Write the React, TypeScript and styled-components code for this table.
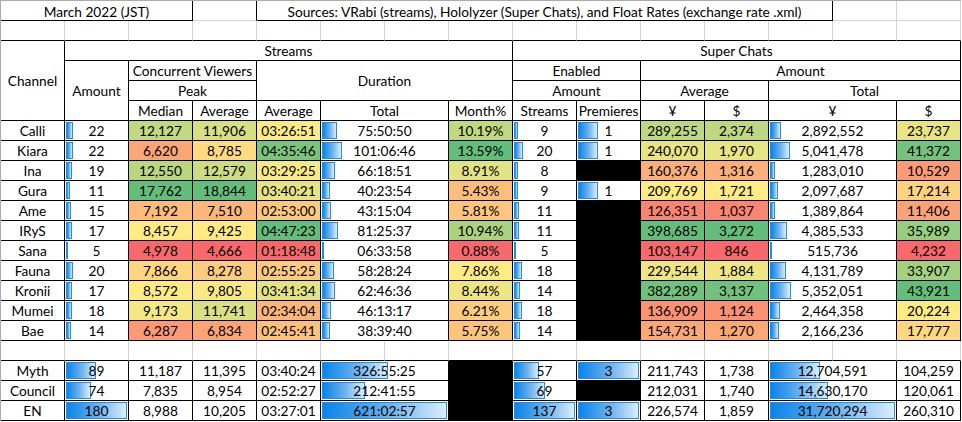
import React from 'react';
import styled, { createGlobalStyle } from 'styled-components';

const GlobalStyle = createGlobalStyle`
  html, body {
    margin: 0;
    padding: 0;
    background: #ffffff;
  }
  body {
    font-family: Lato, "Liberation Sans", sans-serif;
    font-size: 13.7px;
    color: #000000;
  }
`;

const INK = '#000000';
const GRID = '#d4d4d4';

const RED = [248, 105, 107];
const YELLOW = [255, 235, 132];
const GREEN = [99, 190, 123];

type Member = {
  name: string;
  amount: number;
  median: number;
  average: number;
  durAvg: string;
  durTotal: string;
  month: number | null;
  streams: number;
  premieres: number | null;
  yenAvg: number;
  usdAvg: number;
  yenTotal: number;
  usdTotal: number;
};

const members: Member[] = [
  { name: 'Calli', amount: 22, median: 12127, average: 11906, durAvg: '03:26:51', durTotal: '75:50:50', month: 10.19, streams: 9, premieres: 1, yenAvg: 289255, usdAvg: 2374, yenTotal: 2892552, usdTotal: 23737 },
  { name: 'Kiara', amount: 22, median: 6620, average: 8785, durAvg: '04:35:46', durTotal: '101:06:46', month: 13.59, streams: 20, premieres: 1, yenAvg: 240070, usdAvg: 1970, yenTotal: 5041478, usdTotal: 41372 },
  { name: 'Ina', amount: 19, median: 12550, average: 12579, durAvg: '03:29:25', durTotal: '66:18:51', month: 8.91, streams: 8, premieres: null, yenAvg: 160376, usdAvg: 1316, yenTotal: 1283010, usdTotal: 10529 },
  { name: 'Gura', amount: 11, median: 17762, average: 18844, durAvg: '03:40:21', durTotal: '40:23:54', month: 5.43, streams: 9, premieres: 1, yenAvg: 209769, usdAvg: 1721, yenTotal: 2097687, usdTotal: 17214 },
  { name: 'Ame', amount: 15, median: 7192, average: 7510, durAvg: '02:53:00', durTotal: '43:15:04', month: 5.81, streams: 11, premieres: null, yenAvg: 126351, usdAvg: 1037, yenTotal: 1389864, usdTotal: 11406 },
  { name: 'IRyS', amount: 17, median: 8457, average: 9425, durAvg: '04:47:23', durTotal: '81:25:37', month: 10.94, streams: 11, premieres: null, yenAvg: 398685, usdAvg: 3272, yenTotal: 4385533, usdTotal: 35989 },
  { name: 'Sana', amount: 5, median: 4978, average: 4666, durAvg: '01:18:48', durTotal: '06:33:58', month: 0.88, streams: 5, premieres: null, yenAvg: 103147, usdAvg: 846, yenTotal: 515736, usdTotal: 4232 },
  { name: 'Fauna', amount: 20, median: 7866, average: 8278, durAvg: '02:55:25', durTotal: '58:28:24', month: 7.86, streams: 18, premieres: null, yenAvg: 229544, usdAvg: 1884, yenTotal: 4131789, usdTotal: 33907 },
  { name: 'Kronii', amount: 17, median: 8572, average: 9805, durAvg: '03:41:34', durTotal: '62:46:36', month: 8.44, streams: 14, premieres: null, yenAvg: 382289, usdAvg: 3137, yenTotal: 5352051, usdTotal: 43921 },
  { name: 'Mumei', amount: 18, median: 9173, average: 11741, durAvg: '02:34:04', durTotal: '46:13:17', month: 6.21, streams: 18, premieres: null, yenAvg: 136909, usdAvg: 1124, yenTotal: 2464358, usdTotal: 20224 },
  { name: 'Bae', amount: 14, median: 6287, average: 6834, durAvg: '02:45:41', durTotal: '38:39:40', month: 5.75, streams: 14, premieres: null, yenAvg: 154731, usdAvg: 1270, yenTotal: 2166236, usdTotal: 17777 },
];

const totals: Member[] = [
  { name: 'Myth', amount: 89, median: 11187, average: 11395, durAvg: '03:40:24', durTotal: '326:55:25', month: null, streams: 57, premieres: 3, yenAvg: 211743, usdAvg: 1738, yenTotal: 12704591, usdTotal: 104259 },
  { name: 'Council', amount: 74, median: 7835, average: 8954, durAvg: '02:52:27', durTotal: '212:41:55', month: null, streams: 69, premieres: null, yenAvg: 212031, usdAvg: 1740, yenTotal: 14630170, usdTotal: 120061 },
  { name: 'EN', amount: 180, median: 8988, average: 10205, durAvg: '03:27:01', durTotal: '621:02:57', month: null, streams: 137, premieres: 3, yenAvg: 226574, usdAvg: 1859, yenTotal: 31720294, usdTotal: 260310 },
];

const seconds = (t: string) => {
  const [h, m, s] = t.split(':').map(Number);
  return h * 3600 + m * 60 + s;
};

const fmt = (n: number) => n.toLocaleString('en-US');

const mix = (a: number[], b: number[], t: number) =>
  `rgb(${a.map((v, i) => Math.round(v + (b[i] - v) * t)).join(',')})`;

// excel-style 3 colour scale: min red, 50th percentile yellow, max green
const scale = (values: number[]) => {
  const sorted = [...values].sort((a, b) => a - b);
  const min = sorted[0];
  const max = sorted[sorted.length - 1];
  const mid = sorted[Math.floor(sorted.length / 2)];
  return (v: number) =>
    v <= mid
      ? mix(RED, YELLOW, mid === min ? 1 : (v - min) / (mid - min))
      : mix(YELLOW, GREEN, (v - mid) / (max - mid));
};

const scales = {
  median: scale(members.map(m => m.median)),
  average: scale(members.map(m => m.average)),
  durAvg: scale(members.map(m => seconds(m.durAvg))),
  month: scale(members.map(m => m.month ?? 0)),
  yenAvg: scale(members.map(m => m.yenAvg)),
  usdAvg: scale(members.map(m => m.usdAvg)),
  usdTotal: scale(members.map(m => m.usdTotal)),
};

const all = [...members, ...totals];
const maxes = {
  amount: Math.max(...all.map(m => m.amount)),
  dur: Math.max(...all.map(m => seconds(m.durTotal))),
  streams: Math.max(...all.map(m => m.streams)),
  premieres: Math.max(...all.map(m => m.premieres ?? 0)),
  yen: Math.max(...all.map(m => m.yenTotal)),
};

const Sheet = styled.div`
  display: grid;
  grid-template-columns: repeat(15, 64px);
  grid-auto-rows: 20px;
  width: 960px;
  border-top: 1px solid #ababab;
  border-left: 1px solid #ababab;
`;

type CellProps = {
  $span?: number;
  $rows?: number;
  $right?: string;
  $bottom?: string;
  $bg?: string;
};

const Cell = styled.div<CellProps>`
  position: relative;
  box-sizing: border-box;
  grid-column: span ${p => p.$span ?? 1};
  grid-row: span ${p => p.$rows ?? 1};
  display: flex;
  align-items: center;
  justify-content: center;
  border-right: 1px solid ${p => p.$right ?? INK};
  border-bottom: 1px solid ${p => p.$bottom ?? INK};
  background: ${p => p.$bg ?? '#ffffff'};
  line-height: 19px;
  white-space: nowrap;
  overflow: hidden;
`;

const Blank = styled(Cell)``;

const Title = styled(Cell)`
  padding-top: 1px;
`;

const Head = styled(Cell)``;

const Name = styled(Cell)``;

const Value = styled(Cell)``;

const Hidden = styled(Cell)`
  background: #000000;
`;

const Bar = styled.span`
  position: absolute;
  left: 1px;
  top: 1px;
  bottom: 1px;
  box-sizing: border-box;
  min-width: 2px;
  border: 1px solid #1b8fec;
  background: linear-gradient(to right, #0a84e8 0%, #6fb4f0 55%, #dcecfc 100%);
`;

const BarText = styled.span`
  position: relative;
`;

const BarCell = ({ value, max, span = 1, children }: { value: number; max: number; span?: number; children: React.ReactNode }) => {
  const inner = span * 64 - 3;
  return (
    <Value $span={span}>
      <Bar style={{ width: Math.max(2, Math.round((inner * value) / max)) }} />
      <BarText>{children}</BarText>
    </Value>
  );
};

const Row = ({ m, total }: { m: Member; total?: boolean }) => {
  const bg = (fn: (v: number) => string, v: number) => (total ? '#ffffff' : fn(v));
  return (
    <>
      <Name>{m.name}</Name>
      <BarCell value={m.amount} max={maxes.amount}>{m.amount}</BarCell>
      <Value $bg={bg(scales.median, m.median)}>{fmt(m.median)}</Value>
      <Value $bg={bg(scales.average, m.average)}>{fmt(m.average)}</Value>
      <Value $bg={bg(scales.durAvg, seconds(m.durAvg))}>{m.durAvg}</Value>
      <BarCell value={seconds(m.durTotal)} max={maxes.dur} span={2}>{m.durTotal}</BarCell>
      {m.month === null ? <Hidden /> : <Value $bg={bg(scales.month, m.month)}>{m.month.toFixed(2)}%</Value>}
      <BarCell value={m.streams} max={maxes.streams}>{m.streams}</BarCell>
      {m.premieres === null ? <Hidden /> : <BarCell value={m.premieres} max={maxes.premieres}>{m.premieres}</BarCell>}
      <Value $bg={bg(scales.yenAvg, m.yenAvg)}>{fmt(m.yenAvg)}</Value>
      <Value $bg={bg(scales.usdAvg, m.usdAvg)}>{fmt(m.usdAvg)}</Value>
      <BarCell value={m.yenTotal} max={maxes.yen} span={2}>{fmt(m.yenTotal)}</BarCell>
      <Value $bg={bg(scales.usdTotal, m.usdTotal)}>{fmt(m.usdTotal)}</Value>
    </>
  );
};

export default function App() {
  return (
    <>
      <GlobalStyle />
      <Sheet>
        {/* row 1 */}
        <Title $span={3}>March 2022 (JST)</Title>
        <Blank $bottom={GRID} />
        <Title $span={9}>Sources: VRabi (streams), Hololyzer (Super Chats), and Float Rates (exchange rate .xml)</Title>
        <Blank $right={GRID} $bottom={GRID} />
        <Blank $right={GRID} $bottom={GRID} />

        {/* row 2 */}
        {Array.from({ length: 15 }, (_, i) => (
          <Blank key={i} $right={GRID} />
        ))}

        {/* header */}
        <Head $rows={4}>Channel</Head>
        <Head $span={7}>Streams</Head>
        <Head $span={7}>Super Chats</Head>

        <Head $rows={3}>Amount</Head>
        <Head $span={2}>Concurrent Viewers</Head>
        <Head $span={4} $rows={2}>Duration</Head>
        <Head $span={2}>Enabled</Head>
        <Head $span={5}>Amount</Head>

        <Head $span={2}>Peak</Head>
        <Head $span={2}>Amount</Head>
        <Head $span={2}>Average</Head>
        <Head $span={3}>Total</Head>

        <Head>Median</Head>
        <Head>Average</Head>
        <Head>Average</Head>
        <Head $span={2}>Total</Head>
        <Head>Month%</Head>
        <Head>Streams</Head>
        <Head>Premieres</Head>
        <Head>¥</Head>
        <Head>$</Head>
        <Head $span={2}>¥</Head>
        <Head>$</Head>

        {members.map(m => (
          <Row key={m.name} m={m} />
        ))}

        {Array.from({ length: 15 }, (_, i) => (
          <Blank key={`gap${i}`} $right={GRID} />
        ))}

        {totals.map(m => (
          <Row key={m.name} m={m} total />
        ))}
      </Sheet>
    </>
  );
}
